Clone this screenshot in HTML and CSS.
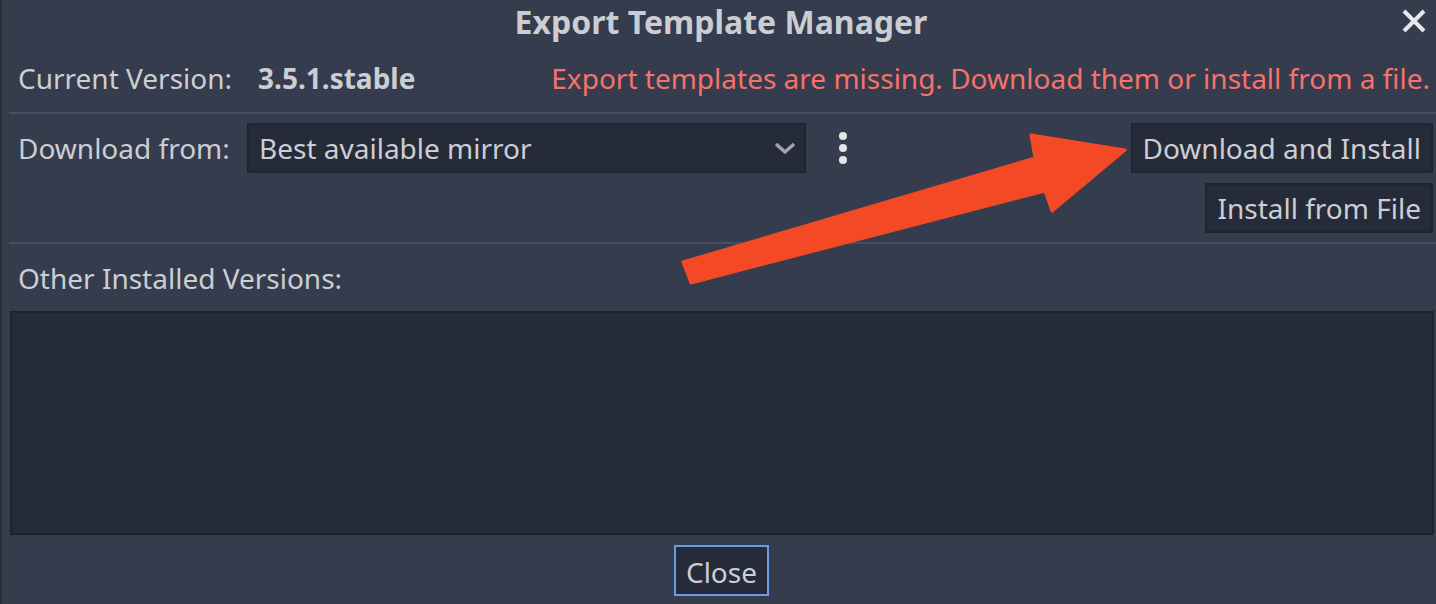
FILE: index.html
```html
<!DOCTYPE html>
<html>
<head>
<meta charset="utf-8">
<link rel="stylesheet" href="styles.css">
</head>
<body>
<div class="window">
  <div class="titlebar">
    <span></span>
    <div class="title">Export Template Manager</div>
    <div class="close-x">
      <svg width="24" height="24" viewBox="0 0 24 24"><path d="M2 2 L22 22 M22 2 L2 22" stroke="#e6e7e9" stroke-width="4" stroke-linecap="butt" fill="none"/></svg>
    </div>
  </div>
  <div class="content">
    <div class="row version-row">
      <span class="label version-label">Current Version:</span>
      <span class="value">3.5.1.stable</span>
      <span class="spacer"></span>
      <span class="error">Export templates are missing. Download them or install from a file.</span>
    </div>
    <div class="sep"></div>
    <div class="row download-row">
      <span class="label from-label">Download from:</span>
      <div class="dropdown">
        <span>Best available mirror</span>
        <svg class="chevron" width="22" height="13" viewBox="0 0 22 13"><path d="M2 2 L11 10 L20 2" stroke="#9fa3ac" stroke-width="3.5" fill="none" stroke-linejoin="miter"/></svg>
      </div>
      <div class="kebab"><i></i><i></i><i></i></div>
      <span class="spacer"></span>
      <div class="buttons">
        <div class="btn">Download and Install</div>
        <div class="btn">Install from File</div>
      </div>
    </div>
    <div class="sep sep2"></div>
    <div class="row other-row">
      <span class="label">Other Installed Versions:</span>
    </div>
    <div class="panel"></div>
    <div class="footer">
      <div class="btn close-btn">Close</div>
    </div>
  </div>
  <svg class="arrow" width="1436" height="604" viewBox="0 0 1436 604">
    <polygon points="683,262 1035,158 1031,135 1125,150 1052,211 1045,191 691,283" fill="#f34a25" stroke="#f34a25" stroke-width="3" stroke-linejoin="round"/>
  </svg>
</div>
</body>
</html>
```
FILE: styles.css
```css
html, body {
  margin: 0;
  padding: 0;
  background: #353c4e;
}
body {
  font-family: "Noto Sans", "Open Sans", sans-serif;
  font-size: 28px;
  color: #ccced3;
  width: 1436px;
  height: 604px;
  overflow: hidden;
}
.window {
  position: relative;
  width: 1434px;
  height: 604px;
  border-left: 2px solid #2b2d33;
  display: flex;
  flex-direction: column;
}
.titlebar {
  height: 44px;
  display: grid;
  grid-template-columns: 1fr auto 1fr;
  align-items: center;
  padding-left: 4px;
}
.title {
  font-weight: bold;
  font-size: 32px;
  line-height: 44px;
  color: #cbcdd2;
}
.close-x {
  justify-self: end;
  margin-right: 10px;
  height: 24px;
  margin-top: -2px;
}
.close-x svg { display: block; }
.content {
  display: flex;
  flex-direction: column;
  padding-left: 7px;
}
.row {
  display: flex;
  align-items: center;
}
.label {
  padding-left: 9px;
  white-space: nowrap;
}
.version-row {
  height: 44px;
  margin-top: 12px;
}
.version-label {
  width: 240px;
}
.value {
  font-weight: bold;
}
.spacer { flex: 1; }
.error {
  color: #f6726a;
  margin-right: 6px;
  white-space: nowrap;
}
.sep {
  height: 2px;
  background: #484f62;
  margin-top: 12px;
}
.download-row {
  margin-top: 9px;
  align-items: flex-start;
}
.from-label {
  width: 229px;
  line-height: 51px;
}
.dropdown {
  height: 46px;
  background: #262b3a;
  border: 2px solid #20242f;
  display: flex;
  align-items: center;
  justify-content: space-between;
  padding-left: 10px;
  box-sizing: content-box;
  padding-right: 0;
  width: 545px;
}
.chevron {
  margin-right: 8px;
  margin-top: 1px;
}
.kebab {
  width: 24px;
  height: 50px;
  margin-left: 25px;
  display: flex;
  flex-direction: column;
  align-items: center;
  justify-content: center;
  gap: 4px;
}
.kebab i {
  display: block;
  width: 8px;
  height: 8px;
  border-radius: 50%;
  background: #e3e4e6;
}
.buttons {
  display: flex;
  flex-direction: column;
  align-items: flex-end;
  gap: 10px;
  margin-right: 3px;
}
.btn {
  background: #262b3a;
  border: 2px solid #20242f;
  height: 46px;
  line-height: 47px;
  padding: 0 10px 0 10px;
  white-space: nowrap;
}
.sep2 {
  margin-top: 9px;
}
.other-row {
  height: 44px;
  margin-top: 12px;
}
.panel {
  margin-top: 11px;
  margin-left: 1px;
  margin-right: 2px;
  height: 220px;
  background: #262b3a;
  border: 2px solid #1e222c;
}
.footer {
  display: flex;
  justify-content: center;
  margin-top: 10px;
  margin-right: 2px;
}
.close-btn {
  border-color: #6a9ce6;
  height: 47px;
  line-height: 50px;
  padding: 0 10px;
}
.arrow {
  position: absolute;
  left: -2px;
  top: 0;
  pointer-events: none;
}
```
